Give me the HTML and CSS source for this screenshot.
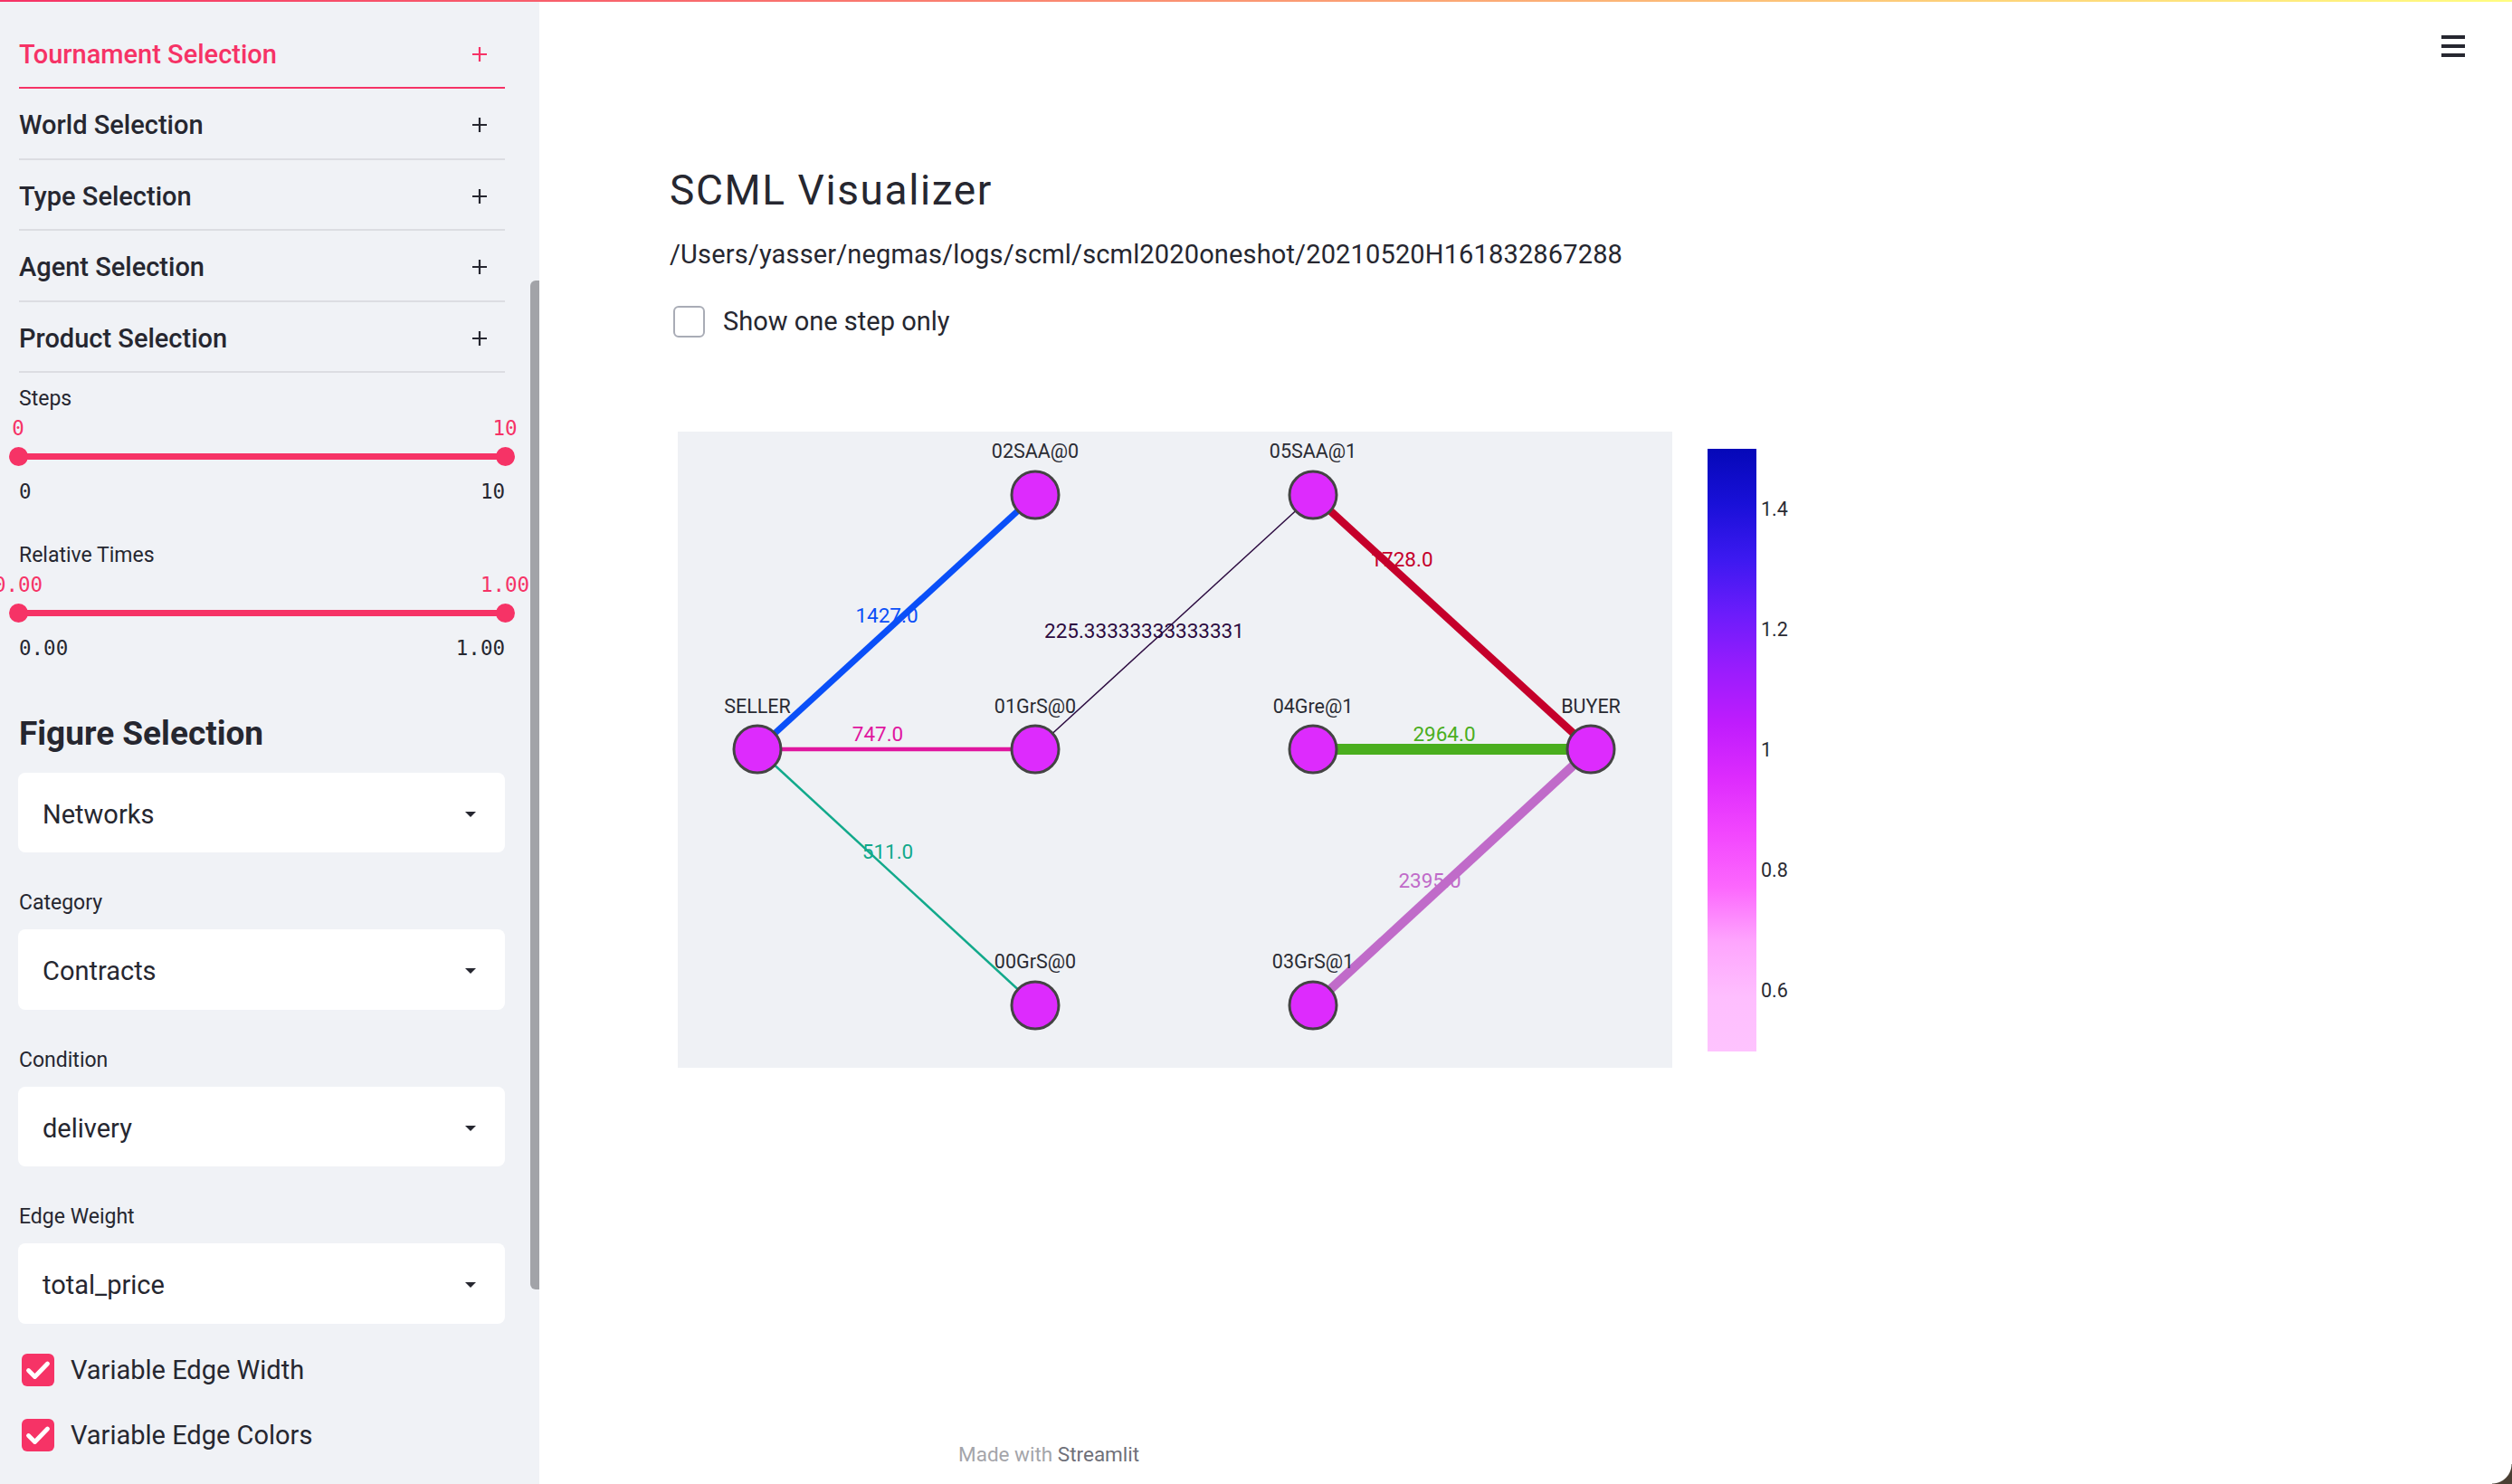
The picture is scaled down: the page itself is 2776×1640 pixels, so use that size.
FILE: index.html
```html
<!DOCTYPE html>
<html lang="en">
<head>
<meta charset="utf-8">
<title>SCML Visualizer · Streamlit</title>
<link rel="stylesheet" href="styles.css">
</head>
<body>
<div class="decoration"></div>
<div class="app">
  <aside class="sidebar">
    <div class="sidebar-content">
      <div class="expander active"><span>Tournament Selection</span><svg class="plus" viewBox="0 0 16 16"><path d="M8 0v16M0 8h16"/></svg></div>
      <div class="expander"><span>World Selection</span><svg class="plus" viewBox="0 0 16 16"><path d="M8 0v16M0 8h16"/></svg></div>
      <div class="expander"><span>Type Selection</span><svg class="plus" viewBox="0 0 16 16"><path d="M8 0v16M0 8h16"/></svg></div>
      <div class="expander"><span>Agent Selection</span><svg class="plus" viewBox="0 0 16 16"><path d="M8 0v16M0 8h16"/></svg></div>
      <div class="expander"><span>Product Selection</span><svg class="plus" viewBox="0 0 16 16"><path d="M8 0v16M0 8h16"/></svg></div>

      <div class="field-label steps-label">Steps</div>
      <div class="slider">
        <div class="slider-values"><span class="anchor"><span>0</span></span><span class="anchor"><span>10</span></span></div>
        <div class="slider-track"><span class="thumb"></span><span class="thumb"></span></div>
        <div class="slider-limits"><span>0</span><span>10</span></div>
      </div>

      <div class="field-label times-label">Relative Times</div>
      <div class="slider">
        <div class="slider-values"><span class="anchor"><span>0.00</span></span><span class="anchor"><span>1.00</span></span></div>
        <div class="slider-track"><span class="thumb"></span><span class="thumb"></span></div>
        <div class="slider-limits"><span>0.00</span><span>1.00</span></div>
      </div>

      <h2 class="section-title">Figure Selection</h2>
      <div class="select first-select"><span>Networks</span><span class="caret"></span></div>

      <div class="field-label">Category</div>
      <div class="select"><span>Contracts</span><span class="caret"></span></div>

      <div class="field-label">Condition</div>
      <div class="select"><span>delivery</span><span class="caret"></span></div>

      <div class="field-label">Edge Weight</div>
      <div class="select"><span>total_price</span><span class="caret"></span></div>

      <div class="cb-row first-cb"><span class="cb"><svg viewBox="0 0 36 36"><polyline points="7.5,18.5 14.5,25.5 28.5,11"/></svg></span><span>Variable Edge Width</span></div>
      <div class="cb-row second-cb"><span class="cb"><svg viewBox="0 0 36 36"><polyline points="7.5,18.5 14.5,25.5 28.5,11"/></svg></span><span>Variable Edge Colors</span></div>
    </div>
    <div class="scrollbar"></div>
  </aside>

  <main class="main">
    <div class="menu"><span></span><span></span><span></span></div>
    <div class="block">
      <h1 class="title">SCML Visualizer</h1>
      <p class="path">/Users/yasser/negmas/logs/scml/scml2020oneshot/20210520H161832867288</p>
      <div class="step-check"><span class="box"></span><span>Show one step only</span></div>

      <svg class="chart" width="1300" height="740" viewBox="0 0 1300 740">
        <defs>
          <linearGradient id="plotly3r" x1="0" y1="0" x2="0" y2="1">
            <stop offset="0" stop-color="#0508b8"/>
            <stop offset="0.0909" stop-color="#1910d8"/>
            <stop offset="0.1818" stop-color="#3c19f0"/>
            <stop offset="0.2727" stop-color="#6b1cfb"/>
            <stop offset="0.3636" stop-color="#981cfd"/>
            <stop offset="0.4545" stop-color="#bf1cfd"/>
            <stop offset="0.5455" stop-color="#dd2bfd"/>
            <stop offset="0.6364" stop-color="#f246fe"/>
            <stop offset="0.7273" stop-color="#fc67fd"/>
            <stop offset="0.8182" stop-color="#fea5fd"/>
            <stop offset="0.9091" stop-color="#febefe"/>
            <stop offset="1" stop-color="#fec3fe"/>
          </linearGradient>
        </defs>
        <rect class="plot-bg" x="9" y="17" width="1099" height="703"/>

        <line x1="97" y1="368" x2="404" y2="87" stroke="#0a4ff8" stroke-width="7"/>
        <line x1="97" y1="368" x2="404" y2="368" stroke="#e0169f" stroke-width="4.5"/>
        <line x1="97" y1="368" x2="404" y2="651" stroke="#12a98b" stroke-width="2.5"/>
        <line x1="404" y1="368" x2="711" y2="87" stroke="#2c0b40" stroke-width="1.5"/>
        <line x1="711" y1="87" x2="1018" y2="368" stroke="#c5002b" stroke-width="8.5"/>
        <line x1="711" y1="368" x2="1018" y2="368" stroke="#4aae1e" stroke-width="12"/>
        <line x1="1018" y1="368" x2="711" y2="651" stroke="#c06bc9" stroke-width="10"/>

        <text class="edge-label" x="240" y="228" fill="#0a4ff8">1427.0</text>
        <text class="edge-label" x="230" y="359" fill="#e0169f">747.0</text>
        <text class="edge-label start" x="414" y="245" fill="#2c0b40">225.33333333333331</text>
        <text class="edge-label" x="809" y="166" fill="#c5002b">1728.0</text>
        <text class="edge-label" x="856" y="359" fill="#4aae1e">2964.0</text>
        <text class="edge-label" x="241" y="489" fill="#12a98b">511.0</text>
        <text class="edge-label" x="840" y="521" fill="#c06bc9">2395.0</text>

        <circle class="node" cx="97" cy="368" r="26"/>
        <circle class="node" cx="404" cy="87" r="26"/>
        <circle class="node" cx="404" cy="368" r="26"/>
        <circle class="node" cx="404" cy="651" r="26"/>
        <circle class="node" cx="711" cy="87" r="26"/>
        <circle class="node" cx="711" cy="368" r="26"/>
        <circle class="node" cx="711" cy="651" r="26"/>
        <circle class="node" cx="1018" cy="368" r="26"/>

        <text class="node-label" x="404" y="46">02SAA@0</text>
        <text class="node-label" x="711" y="46">05SAA@1</text>
        <text class="node-label" x="97" y="328">SELLER</text>
        <text class="node-label" x="404" y="328">01GrS@0</text>
        <text class="node-label" x="711" y="328">04Gre@1</text>
        <text class="node-label" x="1018" y="328">BUYER</text>
        <text class="node-label" x="404" y="610">00GrS@0</text>
        <text class="node-label" x="711" y="610">03GrS@1</text>

        <rect x="1147" y="36" width="54" height="666" fill="url(#plotly3r)"/>
        <text class="tick" x="1206" y="110">1.4</text>
        <text class="tick" x="1206" y="243">1.2</text>
        <text class="tick" x="1206" y="376">1</text>
        <text class="tick" x="1206" y="509">0.8</text>
        <text class="tick" x="1206" y="642">0.6</text>
      </svg>
    </div>
    <footer class="footer">Made with <span>Streamlit</span></footer>
  </main>
</div>
<div class="corner"></div>
</body>
</html>
```

FILE: styles.css
```css
* {
  box-sizing: border-box;
}

html,
body {
  margin: 0;
  padding: 0;
}

body {
  width: 2776px;
  height: 1640px;
  overflow: hidden;
  background: #ffffff;
  color: #262730;
  font-family: Roboto, "Liberation Sans", sans-serif;
}

.decoration {
  position: fixed;
  top: 0;
  left: 0;
  right: 0;
  height: 2px;
  background: linear-gradient(90deg, #f63366, #fffd80);
  z-index: 10;
}

.corner {
  position: fixed;
  right: 0;
  bottom: 0;
  width: 22px;
  height: 22px;
  background: radial-gradient(circle at 0 0, transparent 21px, #4a3f33 22px);
  z-index: 10;
}

.app {
  display: flex;
  height: 1640px;
}

/* ---------- Sidebar ---------- */
.sidebar {
  position: relative;
  flex: 0 0 596px;
  background: #f0f2f6;
  overflow: hidden;
}

.sidebar-content {
  padding: 19.5px 38px 0 21px;
}

.expander {
  height: 78.5px;
  padding-top: 4px;
  border-bottom: 2px solid #dcdde2;
  display: flex;
  align-items: center;
  justify-content: space-between;
  font-size: 29px;
  font-weight: 500;
  white-space: nowrap;
}

.expander.active {
  color: #f63366;
  border-bottom-color: #f63366;
}

.plus {
  width: 16px;
  height: 16px;
  margin-right: 20px;
  flex: none;
}

.plus path {
  stroke: currentColor;
  stroke-width: 2.2;
  fill: none;
}

.field-label {
  font-size: 23px;
  line-height: 30px;
  margin-top: 41px;
}

.field-label.steps-label {
  margin-top: 14px;
}

.field-label.times-label {
  margin-top: 42.4px;
}

.slider {
  width: 538px;
  margin-left: -1px;
}

.slider-values {
  display: flex;
  justify-content: space-between;
  margin-top: 4px;
  font-family: "DejaVu Sans Mono", "Liberation Mono", monospace;
  font-size: 22.5px;
  line-height: 27px;
  color: #f63366;
}

.anchor {
  width: 0;
  display: flex;
  justify-content: center;
  white-space: nowrap;
}

.slider-track {
  margin-top: 7px;
  height: 21px;
  display: flex;
  justify-content: space-between;
  align-items: center;
  background: linear-gradient(#f63366, #f63366) center / 100% 7px no-repeat;
}

.thumb {
  width: 0;
  height: 21px;
  display: flex;
  justify-content: center;
}

.thumb::before {
  content: "";
  flex: 0 0 21px;
  height: 21px;
  border-radius: 50%;
  background: #f63366;
}

.slider-limits {
  display: flex;
  justify-content: space-between;
  margin-top: 14.7px;
  padding-left: 1px;
  font-family: "DejaVu Sans Mono", "Liberation Mono", monospace;
  font-size: 22.5px;
  line-height: 27px;
  color: #262730;
}

.section-title {
  margin: 59.6px 0 0;
  font-size: 37px;
  font-weight: 700;
  line-height: 44px;
}

.select {
  width: 538px;
  height: 88.5px;
  margin: 14px 0 0 -1px;
  padding: 3px 32px 0 27px;
  background: #ffffff;
  border-radius: 8px;
  display: flex;
  align-items: center;
  justify-content: space-between;
  font-size: 29px;
}

.select.first-select {
  margin-top: 20.6px;
}

.caret {
  width: 0;
  height: 0;
  border-left: 6px solid transparent;
  border-right: 6px solid transparent;
  border-top: 6.5px solid #262730;
}

.cb-row {
  display: flex;
  align-items: center;
  height: 36px;
  font-size: 29px;
}

.cb-row.first-cb {
  margin-top: 33px;
}

.cb-row.second-cb {
  margin-top: 36px;
}

.cb {
  width: 36px;
  height: 36px;
  margin: 0 18px 0 3px;
  border-radius: 6px;
  background: #f63366;
  display: flex;
  flex: none;
}

.cb svg {
  width: 36px;
  height: 36px;
}

.cb polyline {
  fill: none;
  stroke: #ffffff;
  stroke-width: 4.8;
  stroke-linecap: round;
  stroke-linejoin: round;
}

.scrollbar {
  position: absolute;
  top: 310px;
  right: 0;
  width: 10.5px;
  height: 1115px;
  border-radius: 6px 0 0 6px;
  background: #a2a3a8;
}

/* ---------- Main ---------- */
.main {
  position: relative;
  flex: 1;
  min-width: 0;
  display: flex;
  flex-direction: column;
}

.menu {
  position: absolute;
  top: 39px;
  right: 52px;
  width: 26px;
  display: flex;
  flex-direction: column;
  gap: 6.5px;
}

.menu span {
  height: 3.5px;
  background: #262730;
}

.block {
  padding: 183px 0 0 144px;
}

.title {
  margin: 0;
  font-size: 46px;
  font-weight: 400;
  line-height: 54px;
  letter-spacing: 1.6px;
}

.path {
  margin: 22.5px 0 0;
  font-size: 29px;
  line-height: 43.5px;
  letter-spacing: 0.15px;
}

.step-check {
  display: flex;
  align-items: center;
  height: 35px;
  margin-top: 34.5px;
  font-size: 29px;
}

.box {
  width: 35px;
  height: 35px;
  margin: 0 20px 0 4px;
  border: 2px solid #a9acb6;
  border-radius: 6px;
  background: #ffffff;
}

.chart {
  display: block;
  margin-top: 87px;
}

.plot-bg {
  fill: #eff1f5;
}

.node {
  fill: #dd2bfd;
  stroke: #444444;
  stroke-width: 3;
}

.node-label {
  font-family: Roboto, "Liberation Sans", sans-serif;
  font-size: 21.5px;
  fill: #2a2b33;
  text-anchor: middle;
}

.edge-label {
  font-family: Roboto, "Liberation Sans", sans-serif;
  font-size: 22.5px;
  text-anchor: middle;
}

.edge-label.start {
  text-anchor: start;
}

.tick {
  font-family: Roboto, "Liberation Sans", sans-serif;
  font-size: 21.5px;
  fill: #2a2b33;
}

.footer {
  margin-top: auto;
  padding: 0 0 17.7px 463px;
  font-size: 22.5px;
  line-height: 30px;
  color: #a4a5aa;
}

.footer span {
  color: #6f7079;
}
```
